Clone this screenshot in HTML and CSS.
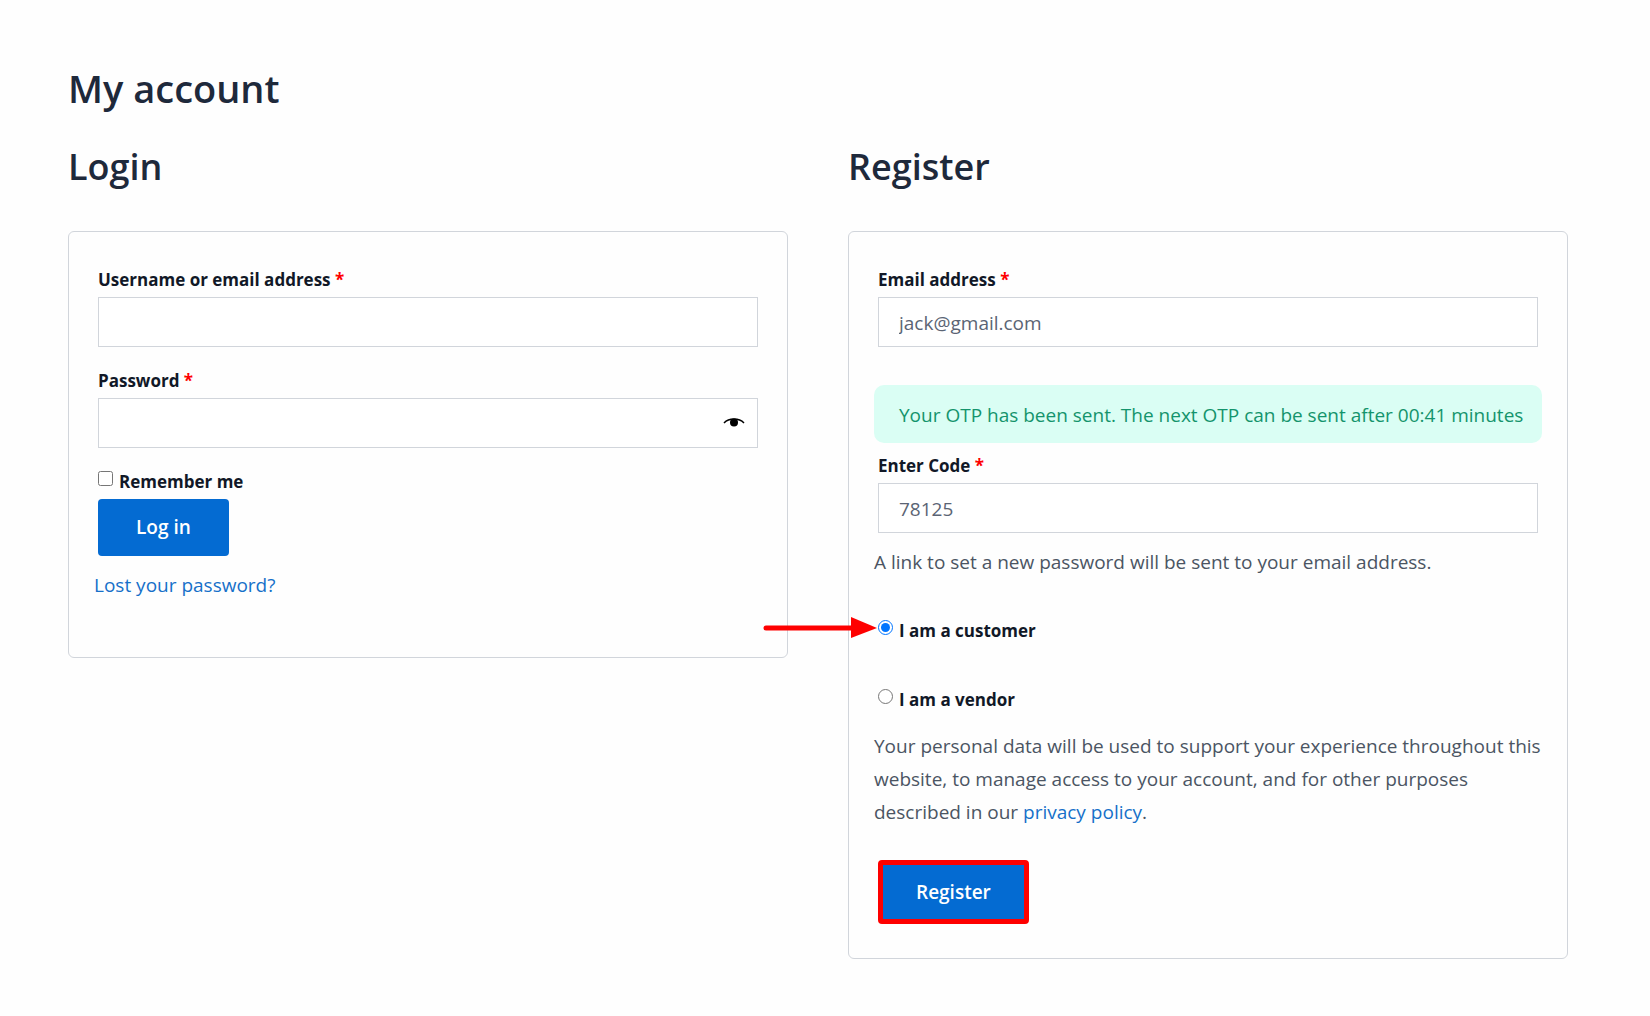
FILE: index.html
```html
<!DOCTYPE html>
<html lang="en">
<head>
  <meta charset="utf-8">
  <meta name="viewport" content="width=device-width, initial-scale=1">
  <title>My account</title>
  <link rel="stylesheet" href="styles.css">
</head>
<body>
  <main class="page">
    <h1 class="page-title">My account</h1>
    <div class="columns">
      <section class="column">
        <h2 class="column-title">Login</h2>
        <form class="card card-login">
          <div class="field">
            <label class="label" for="username">Username or email address <span class="required">*</span></label>
            <input class="input" id="username" type="text">
          </div>
          <div class="field field-next">
            <label class="label" for="password">Password <span class="required">*</span></label>
            <div class="password">
              <input class="input" id="password" type="password">
              <button class="reveal" type="button" aria-label="Show password">
                <svg width="22" height="12" viewBox="0 0 22 12" aria-hidden="true">
                  <path d="M1 6C6 0.700 16 0.700 21 6" fill="none" stroke="#000" stroke-width="1.500"/>
                  <circle cx="11" cy="5.500" r="4" fill="#000"/>
                </svg>
              </button>
            </div>
          </div>
          <div class="field field-next">
            <label class="choice"><input class="tick" type="checkbox">Remember me</label>
            <button class="button" type="submit">Log in</button>
          </div>
          <p class="text text-close"><a class="link" href="#lost">Lost your password?</a></p>
        </form>
      </section>

      <section class="column">
        <h2 class="column-title">Register</h2>
        <form class="card card-register">
          <div class="field">
            <label class="label" for="email">Email address <span class="required">*</span></label>
            <input class="input" id="email" type="email" value="jack@gmail.com">
          </div>
          <p class="notice" role="status">Your OTP has been sent. The next OTP can be sent after 00:41 minutes</p>
          <div class="field">
            <label class="label" for="code">Enter Code <span class="required">*</span></label>
            <input class="input" id="code" type="text" value="78125">
          </div>
          <p class="text text-close">A link to set a new password will be sent to your email address.</p>
          <div class="field role">
            <label class="choice"><input class="tick" type="radio" name="role" checked>I am a customer</label>
            <svg class="arrow" width="114" height="22" viewBox="0 0 114 22" aria-hidden="true">
              <path d="M3 11H92" stroke="#fe0000" stroke-width="5" stroke-linecap="round"/>
              <path d="M88 0L114 11L88 21Z" fill="#fe0000"/>
            </svg>
          </div>
          <div class="field role">
            <label class="choice"><input class="tick" type="radio" name="role">I am a vendor</label>
          </div>
          <p class="text text-close">Your personal data will be used to support your experience throughout this website, to manage access to your account, and for other purposes described in our <a class="link" href="#privacy">privacy policy</a>.</p>
          <div class="field actions">
            <button class="button button-marked" type="submit">Register</button>
          </div>
        </form>
      </section>
    </div>
  </main>
</body>
</html>
```
FILE: styles.css
```css
*,
*::before,
*::after {
  box-sizing: border-box;
}

body {
  margin: 0;
  background: #fefefe;
  color: #4b5563;
  font-family: "Segoe UI", "Open Sans", "Noto Sans", sans-serif;
  font-size: 19px;
  line-height: 33px;
}

h1,
h2,
p {
  margin: 0;
}

.page {
  padding: 61px 82px 57px 68px;
}

.page-title,
.column-title {
  color: #1e293b;
  font-weight: 600;
}

.page-title {
  font-size: 38px;
  line-height: 54px;
}

.columns {
  display: grid;
  grid-template-columns: 1fr 1fr;
  gap: 60px;
  align-items: start;
  margin-top: 25px;
}

.column-title {
  margin-bottom: 37px;
  font-size: 36px;
  line-height: 54px;
}

.card {
  padding: 31px 25px 34px;
  border: 1px solid #d1d5db;
  border-radius: 6px;
}

.card-login {
  padding-bottom: 55px;
}

.field {
  padding: 0 4px;
}

.field-next {
  margin-top: 17px;
}

.label,
.choice {
  display: block;
  color: #111827;
  font-size: 17px;
  font-weight: 700;
  line-height: 34px;
}

.choice {
  display: flex;
  gap: 6px;
}

.required {
  color: #fe0000;
}

.tick {
  width: 15px;
  height: 15px;
  margin: 6px 0 0;
}

.input {
  display: block;
  width: 100%;
  height: 50px;
  padding: 2px 20px 0;
  border: 1px solid #d1d5db;
  border-radius: 0;
  background: #fff;
  color: #5b6474;
  font: inherit;
}

.password {
  position: relative;
}

.reveal {
  position: absolute;
  top: 19px;
  right: 13px;
  display: flex;
  padding: 0;
  border: 0;
  background: none;
}

.button {
  display: block;
  padding: 12px 38px;
  border: 0;
  border-radius: 4px;
  background: #046bd2;
  color: #fff;
  font: inherit;
  font-weight: 600;
}

.button-marked {
  padding: 11px 33px 10px;
  border: 5px solid #fe0000;
}

.link {
  color: #1670c9;
  text-decoration: none;
}

.text-close {
  margin-top: 13px;
}

.notice {
  margin: 38px 0 6px;
  padding: 14px 16px 11px 25px;
  border-radius: 10px;
  background: #dafef4;
  color: #14946c;
}

.role {
  position: relative;
  margin-top: 35px;
}

.arrow {
  position: absolute;
  top: 3px;
  right: 100%;
  margin-right: -3px;
}

.actions {
  margin-top: 31px;
}
```
